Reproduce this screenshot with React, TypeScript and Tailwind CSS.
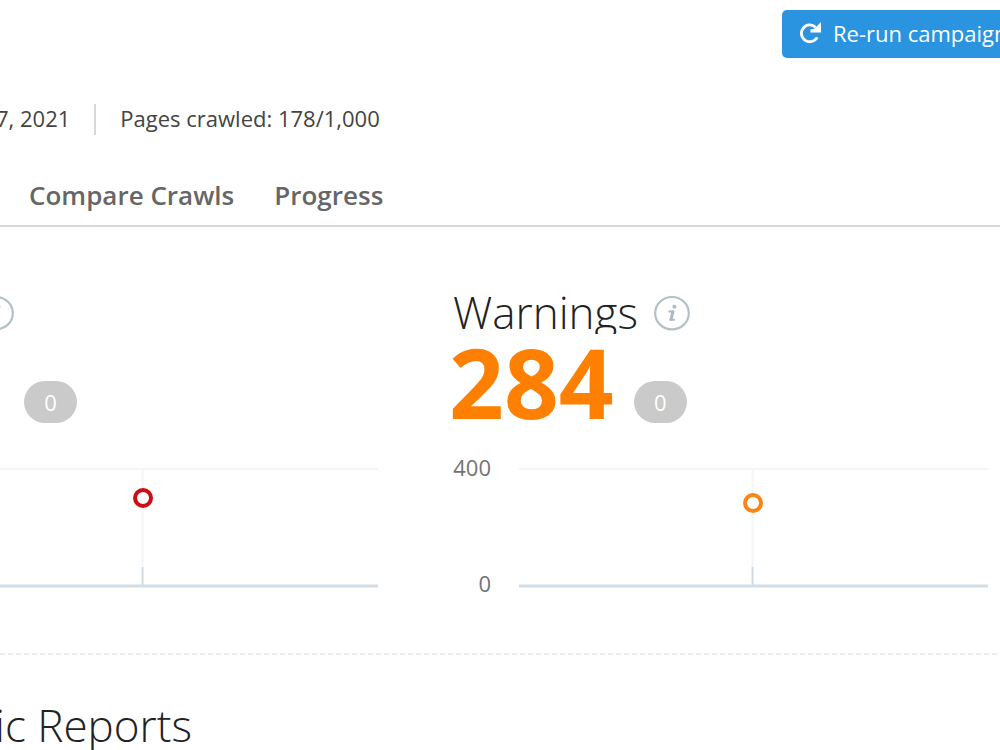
import type { ReactNode } from "react";

type ChartProps = {
    color: string;
    pointY: number;
};

const RerunIcon = () => (
    <svg viewBox="0 0 22 22" className="w-[22px] h-[22px] shrink-0" fill="none" aria-hidden="true">
        <path d="M16.6 5.2A8.4 8.4 0 1 0 18.2 15.4" stroke="currentColor" strokeWidth="2.8" />
        <path d="M22 0V10.4H11.4V7.6L15.6 6.4Z" fill="currentColor" />
    </svg>
);

const InfoIcon = ({ className = "" }: { className?: string }) => (
    <svg viewBox="0 0 36 36" className={`w-9 h-9 shrink-0 ${className}`} fill="none" aria-hidden="true">
        <ellipse cx="18" cy="18.2" rx="16.8" ry="16.2" stroke="#b3c0c5" strokeWidth="2.2" />
        <circle cx="20.4" cy="11.8" r="2" fill="#b0bbc0" />
        <path d="M14.4 16.4H18.8L16.6 24.8H20.8" stroke="#b0bbc0" strokeWidth="2" />
        <path d="M19.2 15.6L16.8 25.4" stroke="#b0bbc0" strokeWidth="3" />
    </svg>
);

const Badge = ({ children }: { children: ReactNode }) => (
    <span className="flex items-center justify-center w-[53px] h-[42px] rounded-full bg-[#cacaca] text-[22px] text-white">
        {children}
    </span>
);

const Chart = ({ color, pointY }: ChartProps) => (
    <svg className="block w-full h-[120px]" aria-hidden="true">
        <line x1="0" y1="1" x2="100%" y2="1" stroke="#f4f5f5" strokeWidth="2" />
        <line x1="49.8%" y1="2" x2="49.8%" y2="99" stroke="#f4f5f5" strokeWidth="2" />
        <line x1="49.8%" y1="99" x2="49.8%" y2="117" stroke="#cfdae4" strokeWidth="2" />
        <line x1="0" y1="118" x2="100%" y2="118" stroke="#d3dde6" strokeWidth="3" />
        <circle cx="49.9%" cy={pointY} r="8" fill="#fff" stroke={color} strokeWidth="4" />
    </svg>
);

const App = () => {
    return (
        <div className="h-screen overflow-hidden bg-white text-[#222] font-['Open_Sans','Noto_Sans',sans-serif]">
            <header className="flex justify-end pt-[10px]">
                <button className="flex items-center gap-3 h-12 pl-[17px] pb-[2px] -mr-6 w-[242px] shrink-0 rounded-[5px] bg-[#2b94e1] text-white text-[22px] whitespace-nowrap">
                    <RerunIcon />
                    Re-run campaign
                </button>
            </header>

            {/* Crawl info */}
            <div className="flex items-center mt-[45px] h-8 text-[22px] text-[#444] whitespace-nowrap">
                <span className="-ml-1 pb-[2px]">7, 2021</span>
                <span className="w-[2px] h-[31px] mx-6 bg-[#d8d8d8]" />
                <span className="pb-[2px]">Pages crawled: 178/1,000</span>
            </div>

            <nav className="flex items-center gap-10 mt-[30px] h-[62px] pl-[29px] border-b-2 border-[#d9d9d9] text-[26px] font-semibold text-[#666] whitespace-nowrap">
                <a href="#compare">Compare Crawls</a>
                <a href="#progress">Progress</a>
            </nav>

            <main>
                <div className="grid grid-cols-[378fr_535fr] gap-[75px] pr-3 pt-[66px]">
                    <section>
                        <div className="flex items-center h-10">
                            <InfoIcon className="-ml-[22px]" />
                        </div>
                        <div className="flex items-end h-[90px] pl-6">
                            <Badge>0</Badge>
                        </div>
                        <div className="mt-[45px] -ml-[91px]">
                            <Chart color="#cb0f14" pointY={30} />
                        </div>
                    </section>

                    <section>
                        <div className="flex items-center gap-4 h-10">
                            <h2 className="h-[42px] overflow-hidden text-[44px] leading-[40px] font-light">Warnings</h2>
                            <InfoIcon />
                        </div>
                        <div className="flex items-end gap-5 h-[90px] -ml-1">
                            <span className="text-[96px] leading-[82px] font-bold text-[#ff8000]">284</span>
                            <Badge>0</Badge>
                        </div>
                        <div className="flex gap-7 mt-[45px]">
                            <div className="flex flex-col justify-between w-[38px] h-[140px] -mt-[13px] -mb-[7px] text-right text-[22px] leading-6 text-[#737373]">
                                <span>400</span>
                                <span>0</span>
                            </div>
                            <div className="flex-1">
                                <Chart color="#fb8514" pointY={35} />
                            </div>
                        </div>
                    </section>
                </div>

                <div className="mt-[65px] h-[2px] bg-[repeating-linear-gradient(90deg,#e9edef_0,#e9edef_5px,transparent_5px,transparent_8px)]" />

                <h2 className="mt-[40px] -ml-[5px] text-[44px] leading-[60px] font-light">ic Reports</h2>
            </main>
        </div>
    );
};

export default App;
